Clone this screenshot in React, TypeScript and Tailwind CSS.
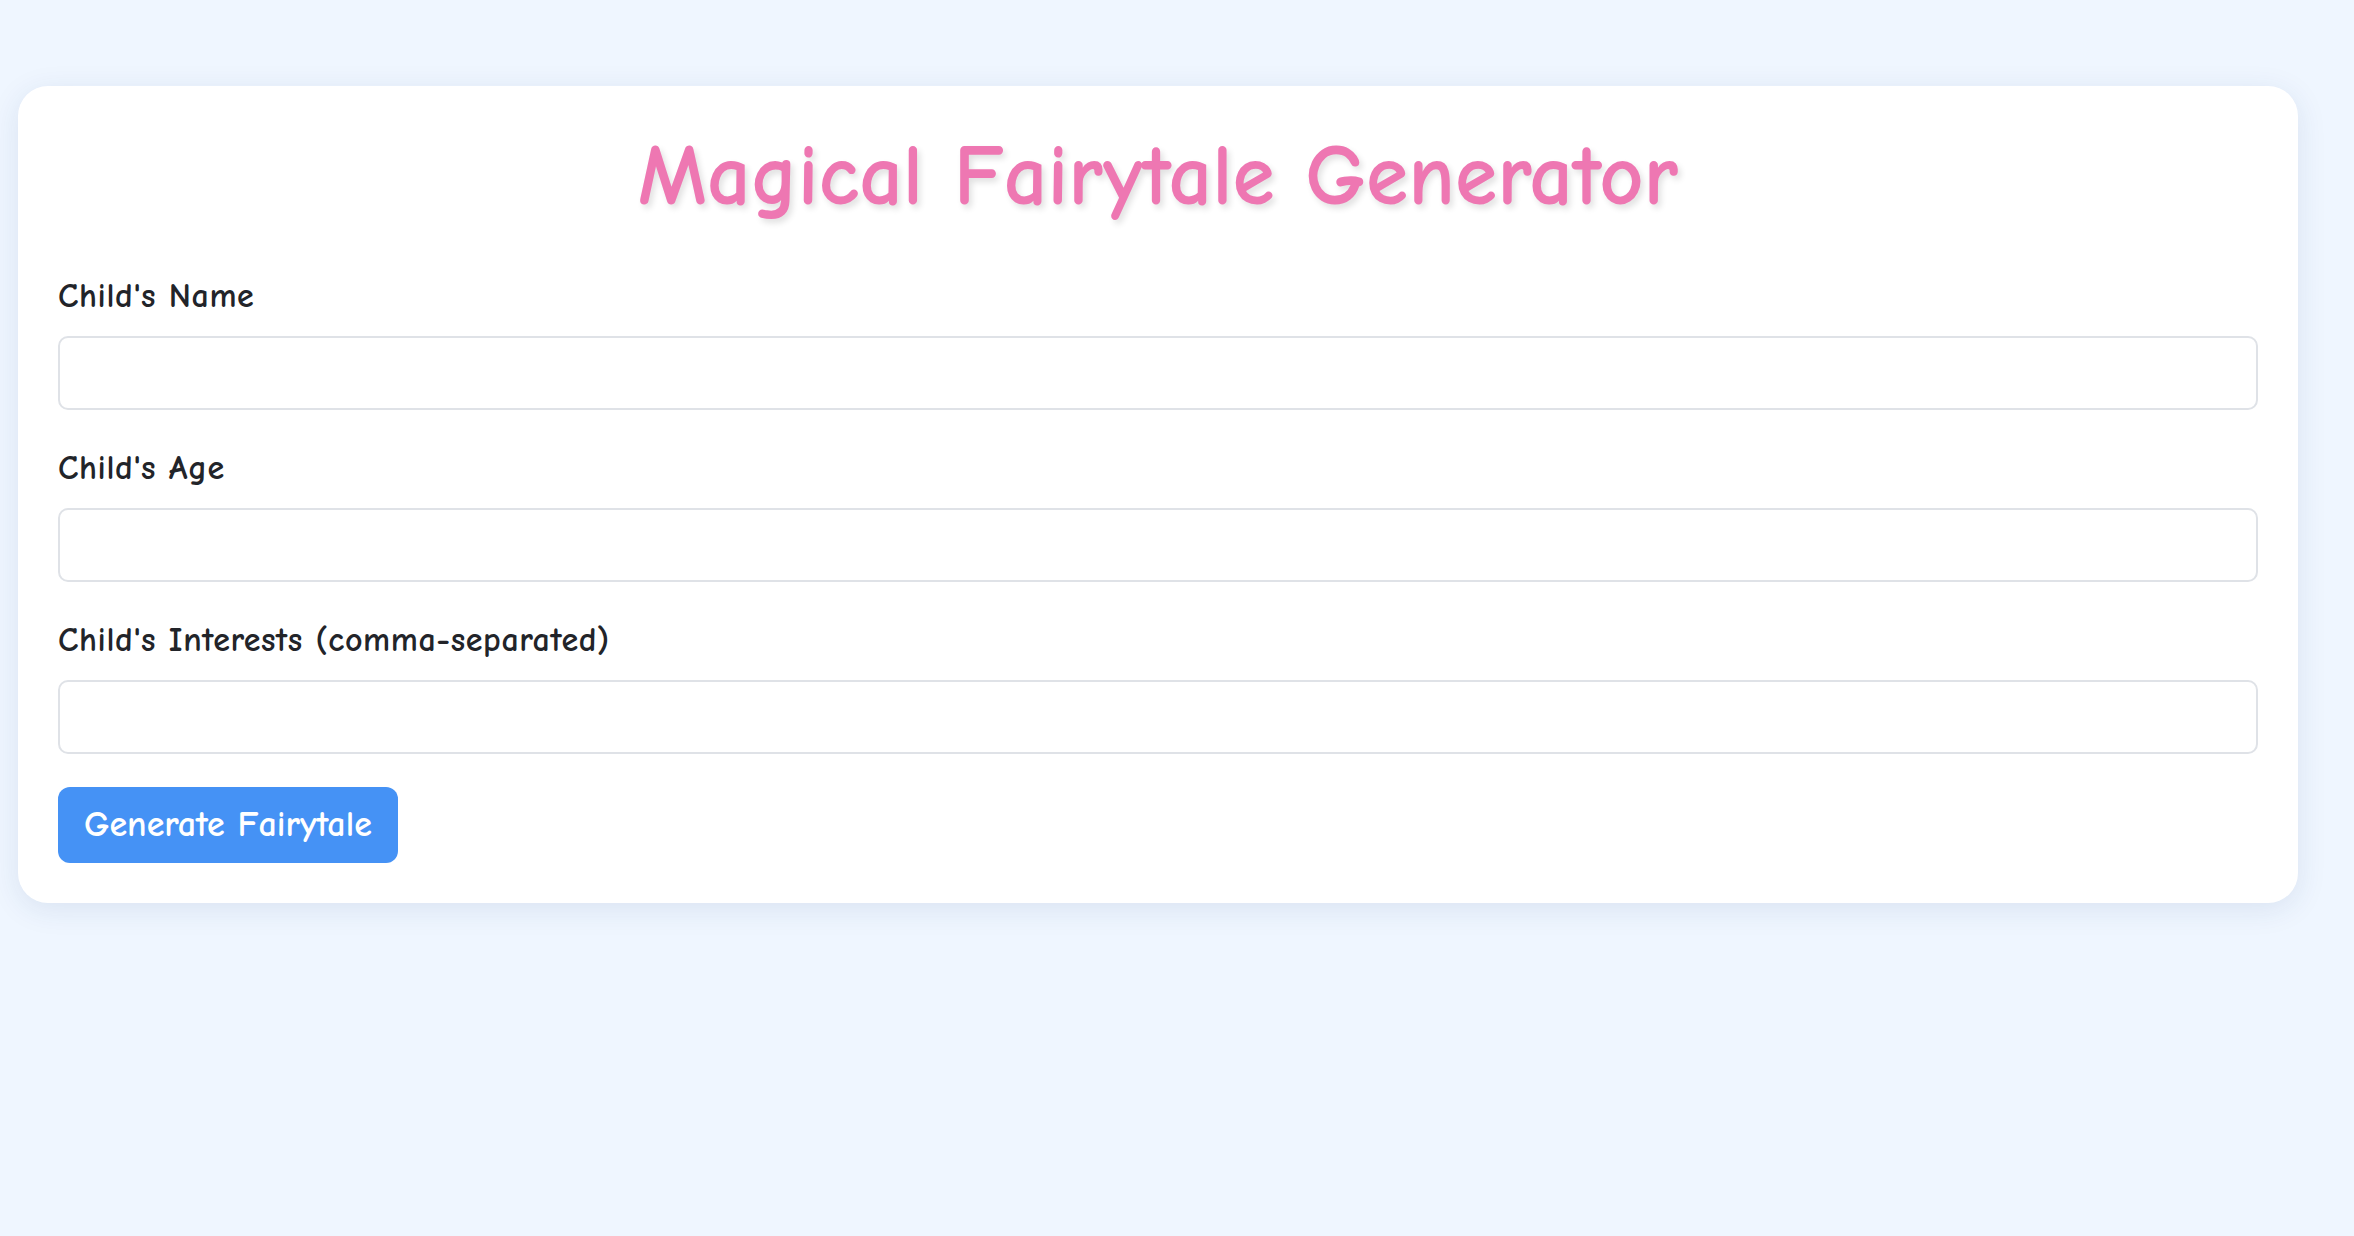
import React from 'react';

const fields = [
    { id: 'name', label: "Child's Name", type: 'text' },
    { id: 'age', label: "Child's Age", type: 'number' },
    { id: 'interests', label: "Child's Interests (comma-separated)", type: 'text' },
];

const App: React.FC = () => {
    return (
        <div className="min-h-[1236px] bg-[#eff6ff] pt-[86px] font-['Comic_Sans_MS','Comic_Neue','DejaVu_Sans',sans-serif]">
            <div className="ml-[18px] w-[2280px] rounded-[30px] bg-white p-[40px] shadow-[0_6px_30px_rgba(30,60,120,0.10)]">
                <h1 className="mb-[49px] text-center text-[86px] font-bold leading-[101px] text-[#ee77b2] [text-shadow:3px_4px_6px_rgba(0,0,0,0.12)]">
                    Magical Fairytale Generator
                </h1>
                {fields.map((f, i) => (
                    <div key={f.id} className={i === fields.length - 1 ? 'mb-[33px]' : 'mb-[38px]'}>
                        <label htmlFor={f.id} className="mb-[20px] block text-[34px] font-bold leading-[40px] tracking-[0.6px] text-[#222429]">
                            {f.label}
                        </label>
                        <input
                            id={f.id}
                            type={f.type}
                            className="block h-[74px] w-full rounded-[10px] border-2 border-[#dfe2e7] bg-white px-[18px] text-[28px] outline-none"
                        />
                    </div>
                ))}
                <button className="h-[76px] rounded-[12px] bg-[#4592f5] px-[26px] text-[36px] font-bold text-white">
                    Generate Fairytale
                </button>
            </div>
        </div>
    );
};

export default App;
